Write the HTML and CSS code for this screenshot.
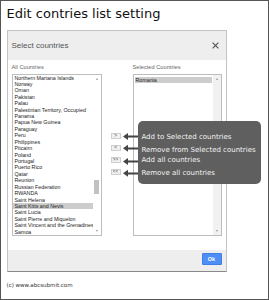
FILE: index.html
```html
<!DOCTYPE html>
<html>
<head>
<meta charset="utf-8">
<link rel="stylesheet" href="styles.css">
</head>
<body>
<div class="frame">
  <h1 class="title">Edit contries list setting</h1>
  <div class="dialog">
    <div class="dlg-head">
      <span class="dlg-title">Select countries</span>
      <svg class="close" width="7" height="7" viewBox="0 0 7 7"><path d="M0.6 0.6 L6.4 6.4 M6.4 0.6 L0.6 6.4" stroke="#555" stroke-width="1.2"/></svg>
    </div>
    <div class="dlg-body">
      <div class="col col-left">
        <div class="label">All Countries</div>
        <div class="listbox">
          <div class="items">
            <div class="item">Northern Mariana Islands</div>
            <div class="item">Norway</div>
            <div class="item">Oman</div>
            <div class="item">Pakistan</div>
            <div class="item">Palau</div>
            <div class="item">Palestinian Territory, Occupied</div>
            <div class="item">Panama</div>
            <div class="item">Papua New Guinea</div>
            <div class="item">Paraguay</div>
            <div class="item">Peru</div>
            <div class="item">Philippines</div>
            <div class="item">Pitcairn</div>
            <div class="item">Poland</div>
            <div class="item">Portugal</div>
            <div class="item">Puerto Rico</div>
            <div class="item">Qatar</div>
            <div class="item">Reunion</div>
            <div class="item">Russian Federation</div>
            <div class="item">RWANDA</div>
            <div class="item">Saint Helena</div>
            <div class="item selected">Saint Kitts and Nevis</div>
            <div class="item">Saint Lucia</div>
            <div class="item">Saint Pierre and Miquelon</div>
            <div class="item">Saint Vincent and the Grenadines</div>
            <div class="item">Samoa</div>
          </div>
          <div class="scroll">
            <span class="tri-up"></span>
            <span class="thumb"></span>
            <span class="tri-down"></span>
          </div>
        </div>
      </div>
      <div class="mid">
        <button class="mbtn">&gt;</button>
        <button class="mbtn">&lt;</button>
        <button class="mbtn">&gt;&gt;</button>
        <button class="mbtn">&lt;&lt;</button>
      </div>
      <div class="col col-right">
        <div class="label">Selected Countries</div>
        <div class="listbox listbox-right">
          <div class="items items-right">
            <div class="item selected">Romania</div>
          </div>
          <div class="scroll scroll-right">
            <span class="tri-up"></span>
            <span class="tri-down"></span>
          </div>
        </div>
      </div>
    </div>
    <div class="dlg-foot">
      <button class="ok">Ok</button>
    </div>
  </div>
  <div class="copy">(c) www.abcsubmit.com</div>

  <svg class="arrows" width="20" height="50" viewBox="0 0 20 50">
    <g fill="#444">
      <path d="M1 6.5 L6 3 L6 5.6 L20 5.6 L20 7.6 L6 7.6 L6 10 Z"/>
      <path d="M1 18.3 L6 14.8 L6 17.4 L20 17.4 L20 19.4 L6 19.4 L6 21.8 Z"/>
      <path d="M1 31.5 L6 28 L6 30.6 L20 30.6 L20 32.6 L6 32.6 L6 35 Z"/>
      <path d="M1 43.3 L6 39.8 L6 42.4 L20 42.4 L20 44.4 L6 44.4 L6 46.8 Z"/>
    </g>
  </svg>
  <div class="tip">
    <div class="tip-line l1">Add to Selected countries</div>
    <div class="tip-line l2">Remove from Selected countries</div>
    <div class="tip-line l3">Add all countries</div>
    <div class="tip-line l4">Remove all countries</div>
  </div>
</div>
</body>
</html>
```
FILE: styles.css
```css
* { box-sizing: border-box; }
html, body { margin: 0; padding: 0; background: #fff; }
.frame {
  position: relative;
  width: 269px;
  height: 300px;
  border: 1.5px solid #555;
  padding-left: 5.5px;
  overflow: hidden;
}
.title {
  margin: 5px 0 0 0;
  font-family: "DejaVu Sans", sans-serif;
  font-weight: normal;
  font-size: 13px;
  line-height: 16px;
  color: #111;
  height: 16px;
}
.dialog {
  margin-top: 7.5px;
  width: 220px;
  height: 242px;
  border: 1px solid #c4c4c4;
  border-bottom-color: #8a8a8a;
  display: flex;
  flex-direction: column;
  font-family: "Liberation Sans", Arial, sans-serif;
}
.dlg-head {
  height: 29px;
  background: #eeeeee;
  display: flex;
  align-items: center;
  justify-content: space-between;
  padding: 0 7px 0 4px;
}
.dlg-title { font-size: 8px; color: #555; }
.close { display: block; }
.dlg-body {
  height: 190px;
  background: #fff;
  display: flex;
  padding: 3px 4px 0 4px;
}
.col { display: flex; flex-direction: column; }
.col-left { width: 90px; }
.col-right { width: 89px; }
.label {
  font-size: 5.7px;
  line-height: 8px;
  color: #666;
  height: 8px;
  margin-bottom: 3px;
}
.listbox {
  height: 162px;
  border: 1px solid #bdbdbd;
  display: flex;
}
.items { flex: 1; overflow: hidden; }
.item {
  font-size: 5.3px;
  line-height: 6.43px;
  height: 6.43px;
  padding-left: 2px;
  color: #222;
  white-space: nowrap;
  overflow: hidden;
}
.item.selected { background: #cdcdcd; }
.items-right { padding: 2px 1px; }
.items-right .item { padding-left: 1px; }
.scroll {
  width: 8px;
  display: flex;
  flex-direction: column;
  align-items: center;
  position: relative;
  background: #fff;
}
.scroll-right { background: #f1f1f1; }
.tri-up {
  margin-top: 3px;
  width: 0; height: 0;
  border-left: 1.5px solid transparent;
  border-right: 1.5px solid transparent;
  border-bottom: 2px solid #999;
}
.tri-down {
  margin-top: auto;
  margin-bottom: 3px;
  width: 0; height: 0;
  border-left: 1.5px solid transparent;
  border-right: 1.5px solid transparent;
  border-top: 2px solid #999;
}
.thumb {
  margin-top: 100px;
  width: 5px;
  height: 14px;
  background: #c2c2c2;
}
.mid {
  width: 31px;
  display: flex;
  flex-direction: column;
  align-items: flex-start;
  padding: 70px 0 0 9px;
  gap: 6.3px;
}
.mbtn {
  width: 10px;
  height: 6px;
  padding: 0;
  margin: 0;
  border: 1px solid #cfcfcf;
  background: #f0f0f0;
  font-family: "Liberation Sans", Arial, sans-serif;
  font-size: 4.5px;
  line-height: 4px;
  color: #333;
}
.dlg-foot {
  flex: 1;
  background: #eeeeee;
  display: flex;
  justify-content: flex-end;
  align-items: flex-start;
  padding: 3px 4px 0 0;
}
.ok {
  width: 20px;
  height: 12px;
  padding: 0;
  border: 1px solid #3d7ee8;
  border-radius: 1px;
  background: #4d8ff7;
  color: #fff;
  font-family: "Liberation Sans", Arial, sans-serif;
  font-size: 5.5px;
  font-weight: bold;
}
.copy {
  margin-top: 9px;
  font-family: "DejaVu Sans", sans-serif;
  font-size: 5.5px;
  line-height: 8px;
  color: #333;
}
.arrows {
  position: absolute;
  left: 120.5px;
  top: 128.5px;
}
.tip {
  position: absolute;
  left: 137px;
  top: 119.5px;
  width: 122.5px;
  height: 63px;
  background: #5f5f5f;
  border-radius: 5px;
  padding: 12.3px 0 0 3.4px;
  font-family: "DejaVu Sans", sans-serif;
  font-size: 7px;
  line-height: 8px;
  color: #f2f2f2;
  white-space: nowrap;
}
.tip-line { height: 8px; }
.l1 { margin-bottom: 5.4px; }
.l2 { margin-bottom: 2.3px; }
.l3 { margin-bottom: 4.7px; }
```
